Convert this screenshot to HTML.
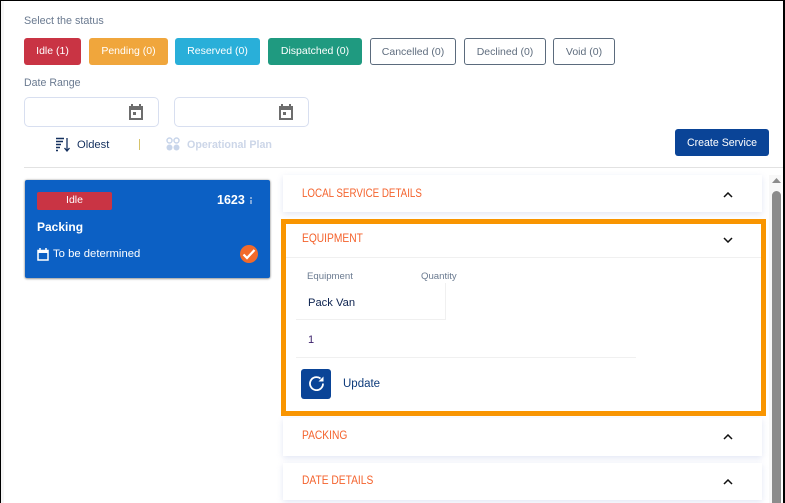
<!DOCTYPE html>
<html><head><meta charset="utf-8"><style>
*{box-sizing:border-box}
html,body{margin:0;padding:0;width:785px;height:503px;overflow:hidden;background:#fff}
body{position:relative;font-family:"Liberation Sans",sans-serif;font-size:11px}
.a{position:absolute;white-space:nowrap}
.b{position:absolute;top:38px;height:27px;border-radius:3px;color:#fff;text-align:center;line-height:27px;font-size:10.500px}
.o{background:#fff;border:1px solid #5b6b7d;color:#5f6d7e;line-height:26px}
.card{position:absolute;left:283px;width:479px;background:#fff;box-shadow:0 2px 6px rgba(190,200,230,.45)}
.t{position:absolute;left:302px;font-size:11.500px;color:#f4622c;line-height:14px;white-space:nowrap;transform-origin:0 50%;transform:scaleX(.89)}
.in{position:absolute;top:97px;width:135px;height:30px;border:1px solid #d8dff0;border-radius:5px;background:#fff}
svg{position:absolute;display:block}
</style></head><body>
<div class="a" style="left:0;top:0;width:785px;height:1px;background:#000"></div>
<div class="a" style="left:0;top:0;width:1px;height:503px;background:#000"></div>
<div class="a" style="left:1px;top:1px;width:3px;height:502px;background:#f6f6f6"></div>
<div class="a" style="left:783px;top:0;width:2px;height:503px;background:#000"></div>

<div class="a" style="left:24px;top:14px;color:#6a7a90;font-size:10.800px;line-height:14px">Select the status</div>
<div class="b" style="left:24px;width:57px;background:#c93444">Idle (1)</div>
<div class="b" style="left:89px;width:79px;background:#f0a63c">Pending (0)</div>
<div class="b" style="left:175px;width:85px;background:#29afd9">Reserved (0)</div>
<div class="b" style="left:268px;width:94px;background:#1f9a80">Dispatched (0)</div>
<div class="b o" style="left:370px;width:86px">Cancelled (0)</div>
<div class="b o" style="left:464px;width:82px">Declined (0)</div>
<div class="b o" style="left:553px;width:62px">Void (0)</div>

<div class="a" style="left:24px;top:76px;color:#6a7a90;font-size:10.600px;line-height:14px">Date Range</div>
<div class="in" style="left:24px"></div>
<div class="in" style="left:174px"></div>
<svg style="left:129px;top:104px" width="14" height="16" viewBox="0 0 14 16"><path d="M3 0v2M11 0v2" stroke="#6d6d6d" stroke-width="2"/><path d="M0 2h14v14H0z" fill="#6d6d6d"/><path d="M2 6h10v8H2z" fill="#fff"/><path d="M4 8h3v3H4z" fill="#6d6d6d"/></svg>
<svg style="left:279px;top:104px" width="14" height="16" viewBox="0 0 14 16"><path d="M3 0v2M11 0v2" stroke="#6d6d6d" stroke-width="2"/><path d="M0 2h14v14H0z" fill="#6d6d6d"/><path d="M2 6h10v8H2z" fill="#fff"/><path d="M4 8h3v3H4z" fill="#6d6d6d"/></svg>

<svg style="left:55px;top:137px" width="15" height="15" viewBox="0 0 15 15"><path d="M1 1.500h8M1 4.500h7M1 7.500h5M1 10.500h4M1 13.500h2" stroke="#14305e" stroke-width="1.500"/><path d="M12 1v12M9.500 11l2.500 3 2.500-3" stroke="#14305e" stroke-width="1.300" fill="none"/></svg>
<div class="a" style="left:77px;top:138px;color:#14305e;font-size:11.200px;line-height:14px">Oldest</div>
<div class="a" style="left:139px;top:139px;width:1px;height:11px;background:#d6c36a"></div>
<svg style="left:166px;top:137px" width="14" height="14" viewBox="0 0 14 14" fill="#c8d5ea"><circle cx="3.500" cy="3.500" r="2.500" fill="none" stroke="#c8d5ea" stroke-width="1.500"/><circle cx="10.500" cy="3.500" r="2.500" fill="none" stroke="#c8d5ea" stroke-width="1.500"/><circle cx="3.500" cy="10.500" r="3"/><circle cx="10.500" cy="10.500" r="3"/></svg>
<div class="a" style="left:187px;top:138px;color:#ccd6e8;font-size:10.700px;font-weight:bold;line-height:14px">Operational Plan</div>
<div class="a" style="left:675px;top:129px;width:94px;height:27px;padding-top:1px;background:#0a4497;border-radius:3px;color:#fff;text-align:center;line-height:26px;font-size:10.600px">Create Service</div>
<div class="a" style="left:24px;top:167px;width:759px;height:1px;background:#e2e2e2"></div>

<div class="a" style="left:25px;top:180px;width:245px;height:98px;background:#0c60c4;border-radius:2px;box-shadow:0 0 2px rgba(0,0,0,.35),0 1px 2px rgba(0,0,0,.3)"></div>
<div class="a" style="left:37px;top:192px;width:75px;height:18px;background:#c93444;border-radius:2px;color:#fff;text-align:center;line-height:17px;font-size:10.500px">Idle</div>
<div class="a" style="left:217px;top:193px;color:#fff;font-weight:bold;font-size:12.500px;line-height:15px">1623</div>
<div class="a" style="left:250px;top:197px;width:2px;height:2px;background:#7fa8dc;box-shadow:0 3px 0 #7fa8dc,0 5px 0 #7fa8dc"></div>
<div class="a" style="left:37px;top:220px;color:#fff;font-weight:bold;font-size:12px;line-height:15px">Packing</div>
<svg style="left:37px;top:248px" width="12" height="13" viewBox="0 0 12 13"><path d="M3 0v2M9 0v2" stroke="#fff" stroke-width="1.500"/><path d="M1 2.500h10v9.500H1z" fill="none" stroke="#fff" stroke-width="1.500"/><path d="M1 2h10v3H1z" fill="#fff"/></svg>
<div class="a" style="left:53px;top:247px;color:#fff;font-size:11.300px;line-height:14px">To be determined</div>
<svg style="left:240px;top:245px" width="18" height="18" viewBox="0 0 18 18"><circle cx="9" cy="9" r="9" fill="#f26a2b"/><path d="M3.500 9.500l3.500 3.500 7.500-8" stroke="#fff" stroke-width="2.200" fill="none"/></svg>

<div class="a" style="left:769px;top:175px;width:12px;height:328px;background:#f8f8f8"></div>
<div class="a" style="left:772px;top:191px;width:9px;height:312px;background:#8c8c8c;border-radius:5px 5px 0 0"></div>
<svg style="left:772px;top:178px" width="9" height="5" viewBox="0 0 9 5"><path d="M4.500 0l4.500 5H0z" fill="#8c8c8c"/></svg>

<div class="card" style="top:175px;height:37px"></div>
<div class="t" style="top:187px;transform:scaleX(.85)">LOCAL SERVICE DETAILS</div>
<svg style="left:723px;top:192px" width="10" height="6" viewBox="0 0 10 6"><path d="M1 5l4-4 4 4" stroke="#111" stroke-width="1.500" fill="none"/></svg>

<div class="a" style="left:281px;top:219px;width:485px;height:197px;border:5px solid #f99500;background:#fff"></div>
<div class="a" style="left:286px;top:257px;width:475px;height:1px;background:#f0f0f0"></div>
<div class="t" style="top:232px">EQUIPMENT</div>
<svg style="left:723px;top:237px" width="10" height="6" viewBox="0 0 10 6"><path d="M1 1l4 4 4-4" stroke="#111" stroke-width="1.500" fill="none"/></svg>
<div class="a" style="left:307px;top:270px;color:#6a7a90;font-size:9.600px;line-height:13px">Equipment</div>
<div class="a" style="left:421px;top:270px;color:#6a7a90;font-size:9.600px;line-height:13px">Quantity</div>
<div class="a" style="left:308px;top:295px;color:#0d2350;font-size:11.200px;line-height:16px">Pack Van</div>
<div class="a" style="left:296px;top:319px;width:150px;height:1px;background:#f0f0f0"></div>
<div class="a" style="left:445px;top:283px;width:1px;height:37px;background:#f0f0f0"></div>
<div class="a" style="left:308px;top:333px;color:#3a1f6a;font-size:11px;line-height:14px">1</div>
<div class="a" style="left:296px;top:357px;width:340px;height:1px;background:#f0f0f0"></div>
<div class="a" style="left:301px;top:369px;width:30px;height:30px;background:#0a4497;border-radius:3px"></div>
<svg style="left:308px;top:375px" width="17" height="17" viewBox="0 0 17 17"><path d="M15 8.500A6.500 6.500 0 1 1 12.500 3.500" stroke="#fff" stroke-width="1.800" fill="none"/><path d="M15.500 1.500v5h-5z" fill="#fff"/></svg>
<div class="a" style="left:343px;top:377px;color:#0d3a7a;font-size:11.500px;line-height:14px">Update</div>

<div class="card" style="top:418px;height:38px"></div>
<div class="t" style="top:429px">PACKING</div>
<svg style="left:723px;top:434px" width="10" height="6" viewBox="0 0 10 6"><path d="M1 5l4-4 4 4" stroke="#111" stroke-width="1.500" fill="none"/></svg>
<div class="card" style="top:463px;height:37px"></div>
<div class="t" style="top:474px">DATE DETAILS</div>
<svg style="left:723px;top:479px" width="10" height="6" viewBox="0 0 10 6"><path d="M1 5l4-4 4 4" stroke="#111" stroke-width="1.500" fill="none"/></svg>
</body></html>
